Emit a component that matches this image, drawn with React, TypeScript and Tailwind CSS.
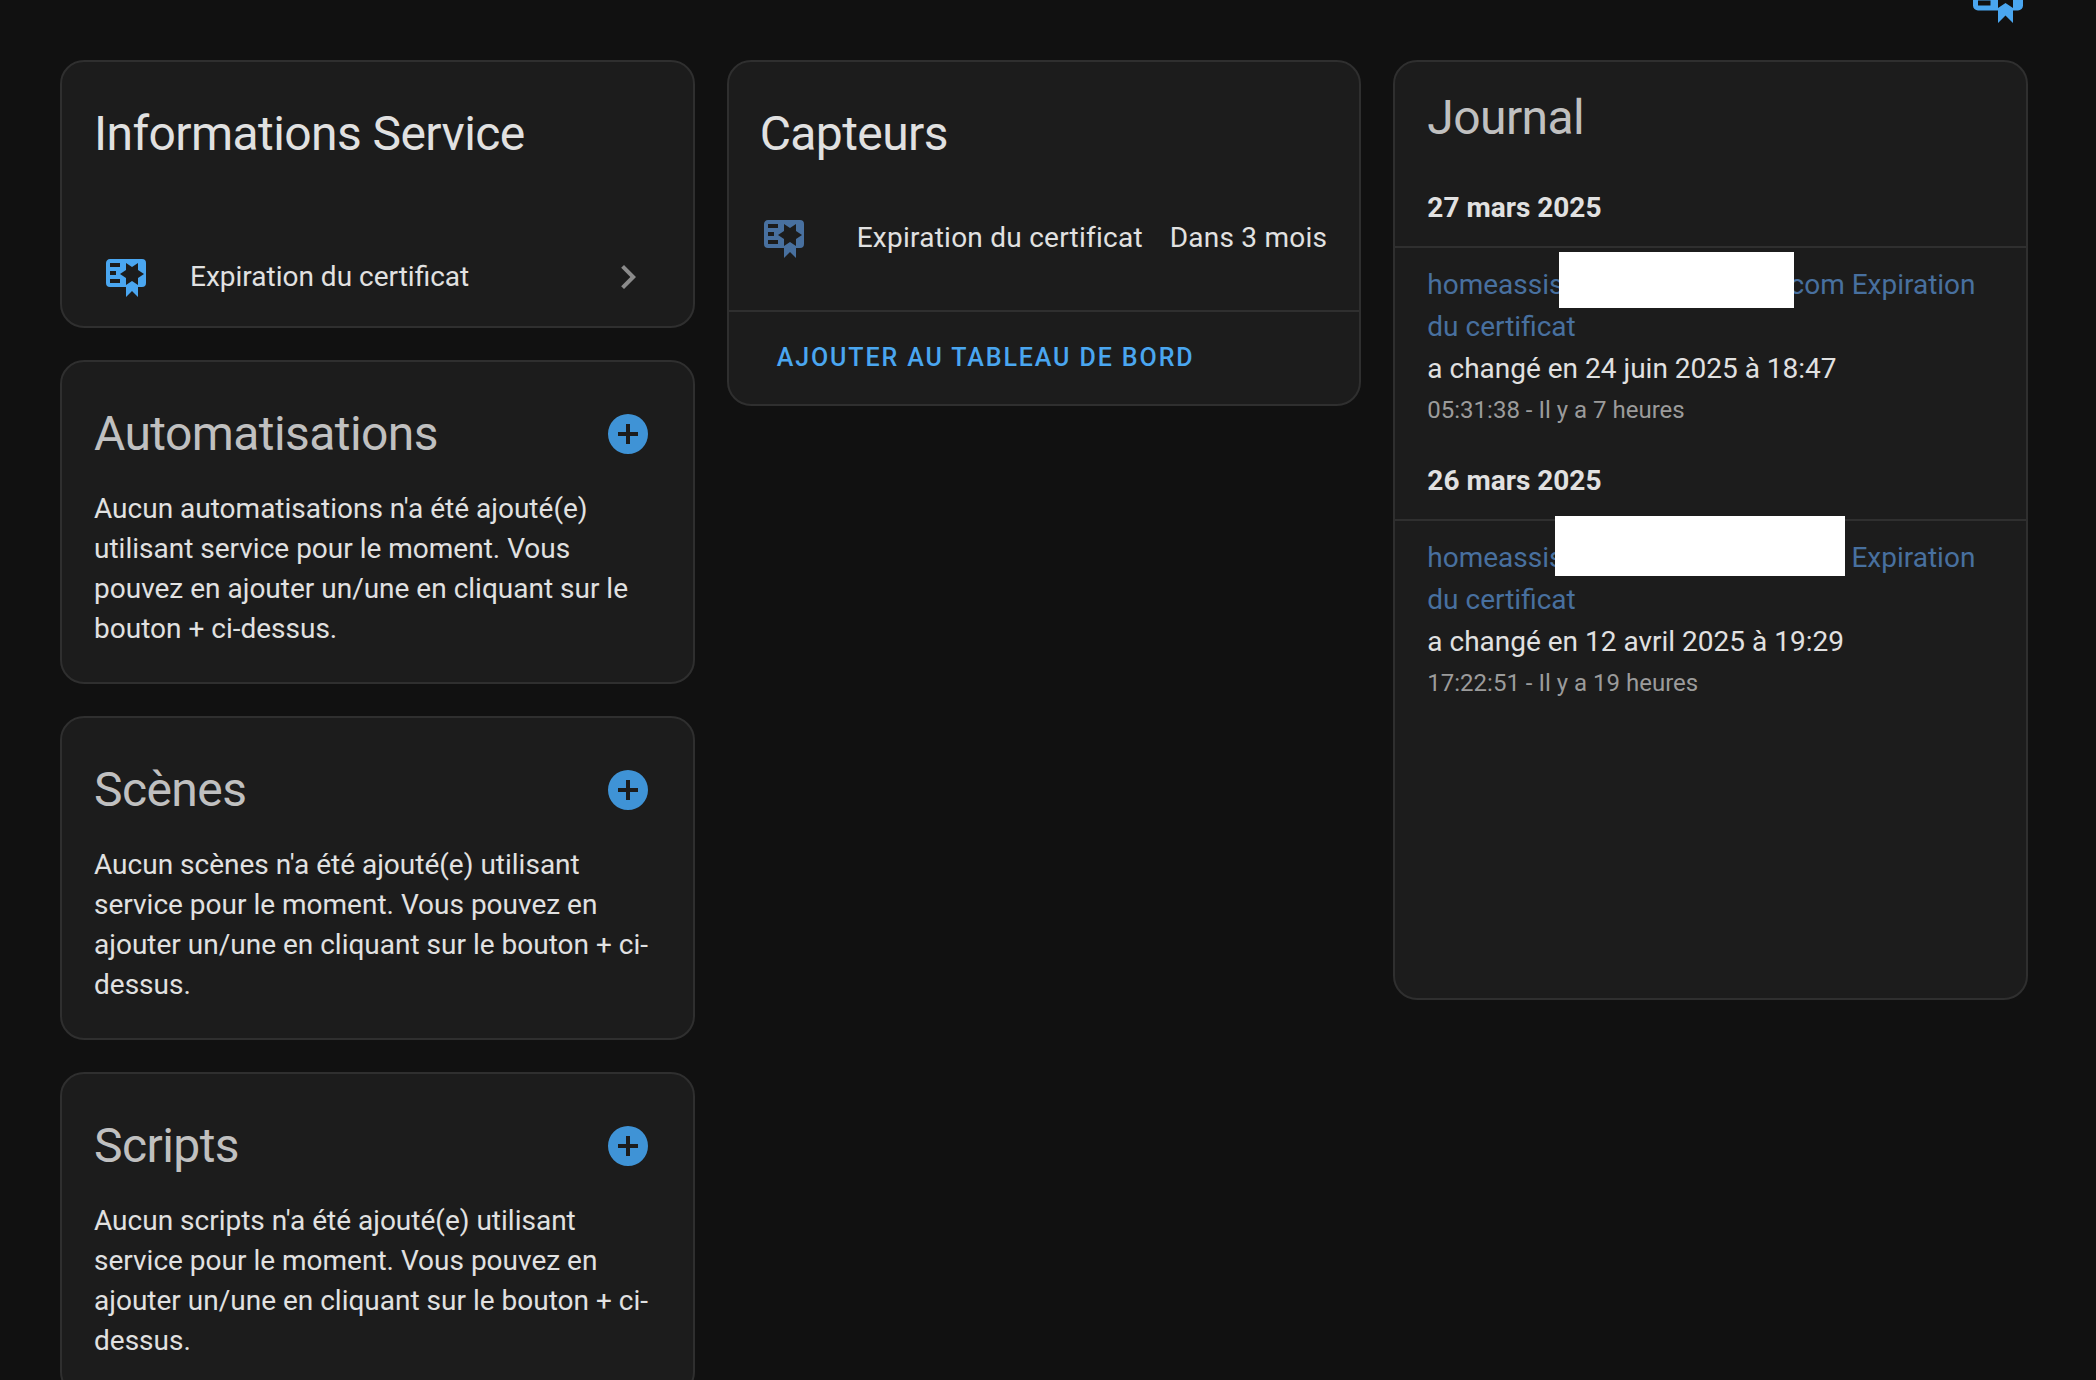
import type { ReactNode } from "react";

const CERT_PATH =
  "M4,3C2.89,3 2,3.89 2,5V15A2,2 0 0,0 4,17H12V22L15,19L18,22V17H20A2,2 0 0,0 22,15V8L22,7V5A2,2 0 0,0 20,3H16V3H4M12,5L15,7L18,5V8.5L21,10.5L18,12.5V16L15,14L12,16V12.5L9,10.5L12,8.5V5M4,5H9V7H4V5M4,9H7V11H4V9M4,13H9V15H4V13Z";

function Mdi({ d, className }: { d: string; className: string }) {
  return (
    <svg viewBox="0 0 24 24" fill="currentColor" className={className}>
      <path d={d} />
    </svg>
  );
}

function Card({ children, className = "" }: { children: ReactNode; className?: string }) {
  return (
    <div className={`rounded-[24px] border-2 border-[#2f2f2f] bg-[#1c1c1c] ${className}`}>
      {children}
    </div>
  );
}

function EmptySection({ title, text }: { title: string; text: string }) {
  return (
    <Card className="h-[324px] shrink-0 px-[32px] pt-[40px]">
      <div className="flex items-center justify-between pr-[9px]">
        <h2 className="text-[48px] leading-[64px] tracking-[-0.576px] text-[#c0c0c0]">{title}</h2>
        <Mdi
          d="M17,13H13V17H11V13H7V11H11V7H13V11H17M12,2A10,10 0 0,0 2,12A10,10 0 0,0 12,22A10,10 0 0,0 22,12A10,10 0 0,0 12,2Z"
          className="h-[48px] w-[48px] text-[#3f93d6]"
        />
      </div>
      <p className="mt-[23px] text-[28px] leading-[40px] text-[#e1e1e1]">{text}</p>
    </Card>
  );
}

function LogEntry({
  date,
  after,
  change,
  time,
  box,
}: {
  date: string;
  after: string;
  change: string;
  time: string;
  box: string;
}) {
  return (
    <div>
      <div className="px-[32px] pb-[18px] text-[28px] font-bold leading-[40px] text-[#e1e1e1]">{date}</div>
      <div className="border-t-2 border-[#2f2f2f] px-[32px] pt-[16px]">
        <div className="text-[28px] leading-[42px] text-[#48709f]">
          homeassis
          <span className={`relative z-10 inline-block bg-white ${box}`} />
          {after}
        </div>
        <div className="text-[28px] leading-[42px] text-[#e1e1e1]">{change}</div>
        <div className="text-[24px] leading-[40px] text-[#9b9b9b]">{time}</div>
      </div>
    </div>
  );
}

export default function App() {
  return (
    <div className="h-[1380px] overflow-hidden bg-[#111111] font-['Roboto',sans-serif]">
      <div className="flex h-[60px] justify-end overflow-hidden pr-[68px]">
        <Mdi d={CERT_PATH} className="-mt-[32px] h-[60px] w-[60px] text-[#4aa6f0]" />
      </div>
      <div className="flex gap-[32px] pl-[60px]">
        <div className="flex w-[634.67px] flex-col gap-[32px]">
          <Card className="h-[268px] px-[32px] pt-[40px]">
            <h2 className="text-[48px] leading-[64px] tracking-[-0.576px] text-[#e1e1e1]">Informations Service</h2>
            <div className="mt-[87px] flex items-center">
              <Mdi d={CERT_PATH} className="ml-[8px] h-[48px] w-[48px] text-[#4aa6f0]" />
              <span className="ml-[40px] flex-1 text-[28px] leading-[40px] text-[#e1e1e1]">Expiration du certificat</span>
              <Mdi
                d="M8.59,16.58L13.17,12L8.59,7.41L10,6L16,12L10,18L8.59,16.58Z"
                className="mr-[9px] h-[48px] w-[48px] text-[#8b8b8b]"
              />
            </div>
          </Card>
          <EmptySection
            title="Automatisations"
            text="Aucun automatisations n'a été ajouté(e) utilisant service pour le moment. Vous pouvez en ajouter un/une en cliquant sur le bouton + ci-dessus."
          />
          <EmptySection
            title="Scènes"
            text="Aucun scènes n'a été ajouté(e) utilisant service pour le moment. Vous pouvez en ajouter un/une en cliquant sur le bouton + ci-dessus."
          />
          <EmptySection
            title="Scripts"
            text="Aucun scripts n'a été ajouté(e) utilisant service pour le moment. Vous pouvez en ajouter un/une en cliquant sur le bouton + ci-dessus."
          />
        </div>
        <div className="w-[634.67px]">
          <Card className="h-[346px]">
            <h2 className="px-[31px] pt-[40px] text-[48px] leading-[64px] tracking-[-0.576px] text-[#e1e1e1]">Capteurs</h2>
            <div className="mt-[40px] flex h-[64px] items-center pl-[31px] pr-[32px]">
              <Mdi d={CERT_PATH} className="h-[48px] w-[48px] text-[#48709f]" />
              <span className="ml-[49px] flex-1 text-[28px] leading-[40px] tracking-[0.25px] text-[#e1e1e1]">
                Expiration du certificat
              </span>
              <span className="text-[28px] leading-[40px] tracking-[0.25px] text-[#e1e1e1]">Dans 3 mois</span>
            </div>
            <div className="mt-[40px] border-t-2 border-[#2f2f2f] px-[48px] pt-[28px] text-[25px] font-medium uppercase leading-[36px] tracking-[1.9px] text-[#4aa6f0]">
              Ajouter au tableau de bord
            </div>
          </Card>
        </div>
        <div className="w-[634.67px]">
          <Card className="h-[940px]">
            <h2 className="px-[32px] pt-[24px] text-[48px] leading-[64px] tracking-[-0.576px] text-[#c0c0c0]">Journal</h2>
            <div className="mt-[38px] flex flex-col gap-[31px]">
              <LogEntry
                date="27 mars 2025"
                after="com Expiration du certificat"
                change="a changé en 24 juin 2025 à 18:47"
                time="05:31:38 - Il y a 7 heures"
                box="-my-[20px] -ml-[5px] -mr-[4px] h-[56px] w-[235px] align-[6px]"
              />
              <LogEntry
                date="26 mars 2025"
                after=" Expiration du certificat"
                change="a changé en 12 avril 2025 à 19:29"
                time="17:22:51 - Il y a 19 heures"
                box="-my-[22px] -ml-[9px] h-[60px] w-[290px] align-[13px]"
              />
            </div>
          </Card>
        </div>
      </div>
    </div>
  );
}
